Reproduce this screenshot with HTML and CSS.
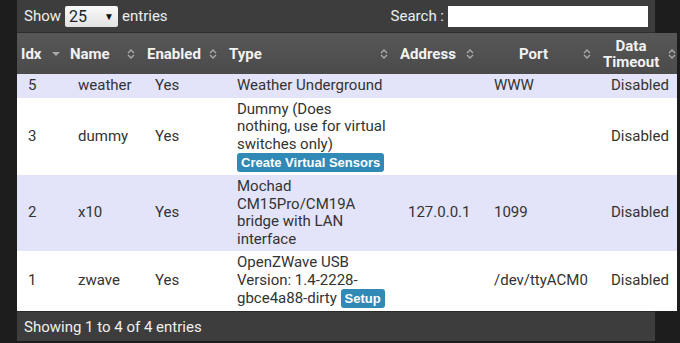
FILE: index.html
```html
<!DOCTYPE html>
<html>
<head>
  <title>Hardware</title>
  <link rel="stylesheet" href="styles.css">
</head>
<body>
  <div class="panel">
    <div class="toolbar">
      <div class="length">
        Show
        <span class="select">25 <span class="caret">&#9660;</span></span>
        entries
      </div>
      <div class="search">
        Search :
        <span class="search-box"></span>
      </div>
    </div>

    <table class="hw-table">
      <colgroup>
        <col class="c-idx">
        <col class="c-name">
        <col class="c-enabled">
        <col class="c-type">
        <col class="c-address">
        <col class="c-port">
        <col class="c-timeout">
      </colgroup>
      <thead>
        <tr>
          <th class="sorted">Idx</th>
          <th>Name</th>
          <th>Enabled</th>
          <th>Type</th>
          <th>Address</th>
          <th class="center">Port</th>
          <th class="center">Data Timeout</th>
        </tr>
      </thead>
      <tbody>
        <tr class="odd">
          <td>5</td>
          <td>weather</td>
          <td>Yes</td>
          <td class="type">Weather Underground</td>
          <td></td>
          <td>WWW</td>
          <td>Disabled</td>
        </tr>
        <tr>
          <td>3</td>
          <td>dummy</td>
          <td>Yes</td>
          <td class="type">Dummy (Does<br>nothing, use for virtual switches only)<br><span class="btn">Create Virtual Sensors</span></td>
          <td></td>
          <td></td>
          <td>Disabled</td>
        </tr>
        <tr class="odd">
          <td>2</td>
          <td>x10</td>
          <td>Yes</td>
          <td class="type">Mochad CM15Pro/CM19A bridge with LAN interface</td>
          <td>127.0.0.1</td>
          <td>1099</td>
          <td>Disabled</td>
        </tr>
        <tr>
          <td>1</td>
          <td>zwave</td>
          <td>Yes</td>
          <td class="type">OpenZWave USB Version: 1.4-2228-gbce4a88-dirty <span class="btn">Setup</span></td>
          <td></td>
          <td>/dev/ttyACM0</td>
          <td>Disabled</td>
        </tr>
      </tbody>
    </table>

    <div class="footer">Showing 1 to 4 of 4 entries</div>
  </div>
</body>
</html>
```

FILE: styles.css
```css
body {
  margin: 0;
  background-color: #1d1d1d;
  font-family: Roboto, "Liberation Sans", sans-serif;
  font-size: 15px;
  color: #333;
  overflow: hidden;
}

.panel {
  margin-left: 17px;
  width: 638px;
  background-color: #3c3c3c;
}

.toolbar {
  display: flex;
  justify-content: space-between;
  align-items: center;
  height: 32px;
  padding: 0 7px;
  background-color: #3d3d3d;
  border-bottom: 1px solid #2e2e2e;
  color: #eee;
}

.length,
.search {
  display: flex;
  align-items: center;
  gap: 4px;
}

.select {
  display: inline-flex;
  align-items: center;
  justify-content: space-between;
  width: 45px;
  height: 21px;
  padding: 0 4px;
  background: linear-gradient(#fafafa, #e2e2e2);
  border-radius: 2px;
  color: #222;
  font-size: 16px;
}

.caret {
  font-size: 10px;
  color: #111;
}

.search-box {
  display: inline-block;
  width: 200px;
  height: 21px;
  background-color: #fff;
}

.hw-table {
  width: 660px;
  table-layout: fixed;
  border-collapse: collapse;
  line-height: 17.5px;
}

.c-idx { width: 49px; }
.c-name { width: 77px; }
.c-enabled { width: 82px; }
.c-type { width: 171px; }
.c-address { width: 86px; }
.c-port { width: 117px; }
.c-timeout { width: 78px; }

.hw-table th {
  position: relative;
  height: 41px;
  padding: 0 18px 0 4px;
  background: linear-gradient(#575757, #4b4b4b);
  color: #f2f2f2;
  font-weight: bold;
  text-align: left;
  line-height: 16px;
}

.hw-table th.center {
  text-align: center;
}

.hw-table th::after {
  content: "";
  position: absolute;
  right: 8px;
  top: 15px;
  width: 8px;
  height: 12px;
  background: url("data:image/svg+xml,%3Csvg xmlns='http://www.w3.org/2000/svg' width='8' height='12'%3E%3Cpath d='M1 5 L4 2 L7 5 M1 7 L4 10 L7 7' fill='none' stroke='%23aaa' stroke-width='1.4'/%3E%3C/svg%3E") no-repeat;
}

.hw-table th:last-child::after {
  right: 1px;
}

.hw-table th.sorted::after {
  right: 6px;
  top: 19px;
  height: 5px;
  background: url("data:image/svg+xml,%3Csvg xmlns='http://www.w3.org/2000/svg' width='8' height='5'%3E%3Cpath d='M0 0 L8 0 L4 4 Z' fill='%23aaa'/%3E%3C/svg%3E") no-repeat;
}

.hw-table td {
  padding: 3px 12px 3px 12px;
  background-color: #fff;
  vertical-align: middle;
}

.hw-table td:first-child {
  padding-left: 11px;
}

.hw-table td.type {
  padding-right: 4px;
}

.hw-table tr.odd td {
  background-color: #e3e3f9;
}

.btn {
  display: inline-block;
  padding: 1px 4px;
  background-color: #3189b6;
  border-radius: 3px;
  color: #fff;
  font-family: "Liberation Sans", Arial, sans-serif;
  font-size: 13px;
  font-weight: bold;
  line-height: 17px;
  white-space: nowrap;
}

.footer {
  height: 29px;
  padding: 0 7px;
  display: flex;
  align-items: center;
  background-color: #3d3d3d;
  border-top: 1px solid #2a2a2a;
  color: #f0f0f0;
}
```
